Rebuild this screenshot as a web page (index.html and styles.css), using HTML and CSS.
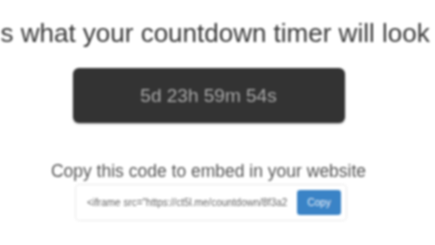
FILE: index.html
```html
<!DOCTYPE html>
<html>
<head>
<meta charset="utf-8">
<link rel="stylesheet" href="styles.css">
</head>
<body>
<div class="page">
  <div class="heading-row">
    <h2 class="heading">Here's what your countdown timer will look like</h2>
  </div>
  <div class="timer">5d 23h 59m 54s</div>
  <p class="caption">Copy this code to embed in your website</p>
  <div class="embed">
    <span class="code">&lt;iframe src="https://ct5l.me/countdown/8f3a2</span>
    <button class="copy">Copy</button>
  </div>
</div>
</body>
</html>
```
FILE: styles.css
```css
html, body {
  margin: 0;
  padding: 0;
  background: #fff;
}
body {
  width: 435px;
  height: 245px;
  overflow: hidden;
  font-family: "Liberation Sans", Arial, sans-serif;
}
.page {
  display: flex;
  flex-direction: column;
  align-items: center;
  padding-top: 19px;
  filter: blur(1.3px);
}
.heading-row {
  width: 435px;
  display: flex;
  justify-content: center;
  overflow: hidden;
}
.heading {
  margin: 0 0 0 -20px;
  white-space: nowrap;
  flex-shrink: 0;
  font-size: 26px;
  font-weight: normal;
  color: #383838;
  line-height: 28px;
}
.timer {
  margin-top: 21px;
  width: 272px;
  height: 55px;
  margin-left: -18px;
  background: #333;
  border-radius: 6px;
  color: #a8a8a8;
  font-size: 19px;
  display: flex;
  align-items: center;
  justify-content: center;
  box-shadow: 0 1px 2px rgba(0,0,0,0.3);
}
.caption {
  margin: 38px 0 0 -18px;
  font-size: 17.5px;
  color: #555;
  line-height: 20px;
}
.embed {
  margin: 3px 0 0 -13px;
  width: 272px;
  height: 37px;
  border: 1px solid #eaeaea;
  border-radius: 4px;
  display: flex;
  align-items: center;
  padding-left: 11px;
  gap: 7px;
  box-sizing: border-box;
}
.code {
  width: 203px;
  overflow: hidden;
  white-space: nowrap;
  font-size: 10px;
  color: #666;
}
.copy {
  width: 44px;
  height: 25px;
  background: #3a83c6;
  border: none;
  border-radius: 3px;
  color: #e8f0fa;
  font-size: 10px;
  font-family: "Liberation Sans", Arial, sans-serif;
  padding: 0;
}
```
